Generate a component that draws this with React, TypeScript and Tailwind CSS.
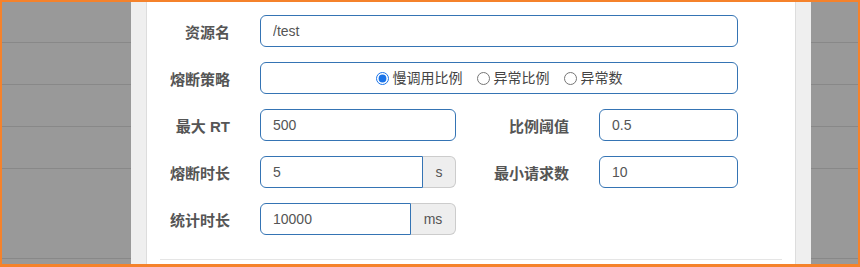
import React from 'react'

const font = { fontFamily: '"Liberation Sans", "Noto Sans CJK SC", sans-serif' }

function Backdrop({ className }: { className: string }) {
  return (
    <div className={`bg-[#999999] flex flex-col ${className}`}>
      <div className="h-[41px] border-b border-[#888]" />
      <div className="h-[42px] border-b border-[#888]" />
      <div className="h-[42px] border-b border-[#888]" />
      <div className="h-[42px] border-b border-[#888]" />
      <div className="h-[90px] border-b border-[#888]" />
    </div>
  )
}

function Label({ text, right }: { text: string; right?: boolean }) {
  return (
    <label className={`w-[83px] shrink-0 mt-[4px] text-right font-bold text-[15px] text-[#555] ${right ? 'ml-[30px]' : ''}`}>
      {text}
    </label>
  )
}

function Input({ value, w }: { value: string; w: string }) {
  return (
    <input
      readOnly
      value={value}
      className={`${w} h-[32px] ml-[30px] px-[12px] text-[14px] text-[#555] border border-[#3574b4] rounded-[6px] outline-none bg-white`}
    />
  )
}

function Group({ value, unit, addon }: { value: string; unit: string; addon: string }) {
  return (
    <div className="w-[196px] h-[32px] ml-[30px] flex">
      <input
        readOnly
        value={value}
        className="flex-1 min-w-0 px-[12px] text-[14px] text-[#555] border border-[#3574b4] rounded-l-[6px] outline-none bg-white"
      />
      <span className={`${addon} flex items-center justify-center text-[14px] text-[#555] bg-[#eeeeee] border border-l-0 border-[#cccccc] rounded-r-[6px]`}>
        {unit}
      </span>
    </div>
  )
}

function Radio({ text, checked }: { text: string; checked?: boolean }) {
  return (
    <label className="flex items-center gap-[4px] text-[14px] text-[#444]">
      <input type="radio" name="strategy" defaultChecked={checked} className="m-0 w-[13px] h-[13px] accent-[#1a73e8]" />
      {text}
    </label>
  )
}

export default function App() {
  return (
    <div style={font} className="w-[860px] h-[267px] flex border-[#f5822b] border-t-2 border-x-2 border-b-[3px] overflow-hidden">
      <Backdrop className="w-[129px]" />
      <div className="w-[680px] shrink-0 bg-[#efefef] px-[15px]">
        <div className="h-full bg-white border-x border-[#dddddd] pt-[13px] flex flex-col">
          <div className="flex flex-col gap-[15px]">
            <div className="flex items-center">
              <Label text="资源名" />
              <Input value="/test" w="w-[478px]" />
            </div>
            <div className="flex items-center">
              <Label text="熔断策略" />
              <div className="w-[478px] h-[32px] ml-[30px] border border-[#3574b4] rounded-[6px] flex items-center justify-center gap-[14px]">
                <Radio text="慢调用比例" checked />
                <Radio text="异常比例" />
                <Radio text="异常数" />
              </div>
            </div>
            <div className="flex items-center">
              <Label text="最大 RT" />
              <Input value="500" w="w-[196px]" />
              <Label text="比例阈值" right />
              <Input value="0.5" w="w-[139px]" />
            </div>
            <div className="flex items-center">
              <Label text="熔断时长" />
              <Group value="5" unit="s" addon="w-[33px]" />
              <Label text="最小请求数" right />
              <Input value="10" w="w-[139px]" />
            </div>
            <div className="flex items-center">
              <Label text="统计时长" />
              <Group value="10000" unit="ms" addon="w-[45px]" />
            </div>
          </div>
          <div className="mt-[24px] mx-[13px] border-t border-[#e5e5e5]" />
        </div>
      </div>
      <Backdrop className="flex-1" />
    </div>
  )
}
